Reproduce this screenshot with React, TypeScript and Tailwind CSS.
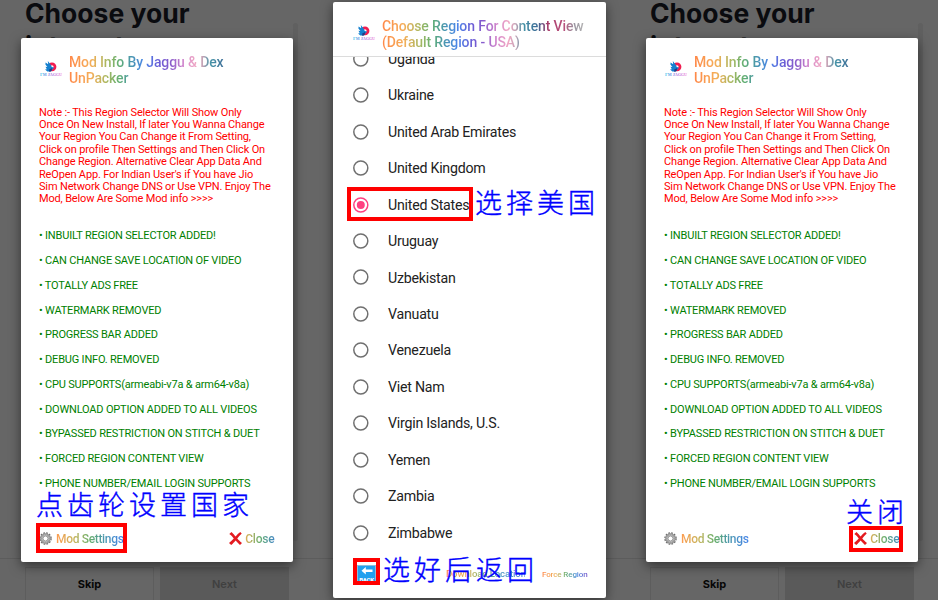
import React from "react";

const note = [
  "Note :- This Region Selector Will Show Only",
  "Once On New Install, If later You Wanna Change",
  "Your Region You Can Change it From Setting,",
  "Click on profile Then Settings and Then Click On",
  "Change Region. Alternative Clear App Data And",
  "ReOpen App. For Indian User's if You have Jio",
  "Sim Network Change DNS or Use VPN. Enjoy The",
  "Mod, Below Are Some Mod info >>>>",
];

const features = [
  "INBUILT REGION SELECTOR ADDED!",
  "CAN CHANGE SAVE LOCATION OF VIDEO",
  "TOTALLY ADS FREE",
  "WATERMARK REMOVED",
  "PROGRESS BAR ADDED",
  "DEBUG INFO. REMOVED",
  "CPU SUPPORTS(armeabi-v7a & arm64-v8a)",
  "DOWNLOAD OPTION ADDED TO ALL VIDEOS",
  "BYPASSED RESTRICTION ON STITCH & DUET",
  "FORCED REGION CONTENT VIEW",
  "PHONE NUMBER/EMAIL LOGIN SUPPORTS",
];

const countries = [
  "Uganda",
  "Ukraine",
  "United Arab Emirates",
  "United Kingdom",
  "United States",
  "Uruguay",
  "Uzbekistan",
  "Vanuatu",
  "Venezuela",
  "Viet Nam",
  "Virgin Islands, U.S.",
  "Yemen",
  "Zambia",
  "Zimbabwe",
];

const rainbow =
  "bg-clip-text text-transparent bg-[linear-gradient(90deg,#ff8748_0px,#f5ae58_22px,#a8b860_38px,#62af72_50px,#4b98ae_62px,#4a86e8_75px,#6a5cd6_90px,#8a5ccb_102px,#d487cc_115px,#f0a8c4_127px,#c0a2b4_134px,#4795a8_141px,#3c6a96_156px,#a83c6a_166px,#b8507c_182px,#9a95a0_192px,#b4b4b4_202px)]";

function Logo() {
  return (
    <svg width="22" height="18" viewBox="0 0 22 18" className="shrink-0">
      <defs>
        <linearGradient id="logoText" x1="0" x2="1" y1="0" y2="0">
          <stop offset="0" stopColor="#35c4ea" />
          <stop offset="0.5" stopColor="#9a6bdf" />
          <stop offset="1" stopColor="#ee7fd8" />
        </linearGradient>
      </defs>
      <circle cx="12" cy="5.8" r="3" fill="none" stroke="#f01d50" strokeWidth="2.800" />
      <path d="M5.600 1.400 8.200 3.200 7.800 0l2.800 3.400 1.200 2.600 2.200.4-1.800 2.400-1.600 1.600-3.200.2-2.400-2.200 1.800-.2L5.500 5.800l2 .2L5.400 3.600z" fill="#1480cf" />
      <path d="m9.200 8.400 3-1.400-.6 3-2.200 1z" fill="#263b83" />
      <text x="0" y="14.800" fontSize="5" textLength="22" lengthAdjust="spacingAndGlyphs" fill="url(#logoText)" fontFamily="Liberation Serif, serif" fontWeight="bold">I'M JAGGU</text>
    </svg>
  );
}

function Gear() {
  return (
    <svg width="13" height="13" viewBox="0 0 26 26" className="shrink-0">
      <circle cx="13" cy="13" r="11.200" fill="none" stroke="#6c6c6c" strokeWidth="2.600" strokeDasharray="3.500 2.360" />
      <circle cx="13" cy="13" r="8.400" fill="none" stroke="#858585" strokeWidth="4" />
      <circle cx="13" cy="13" r="8.300" fill="none" stroke="#bcbcbc" strokeWidth="1.300" />
      <circle cx="13" cy="13" r="5.200" fill="#fff" stroke="#6a6a6a" strokeWidth="1.600" />
    </svg>
  );
}

function Cross() {
  return (
    <svg width="13" height="13" viewBox="0 0 26 26" className="shrink-0">
      <path d="M5 0C8.500 3.500 10.700 6 13.200 9 16 5.600 19 2.600 22.500 0L25.500 3C22 6 19 9.500 16.500 13c3 3.500 5.800 6 9.500 9l-4 4c-3.200-3-6-6-8.800-9.200C10.300 20 8 23 4.400 26L0 22c3.600-3 6.800-6 9.500-9.200C7 9.500 4.400 6.500.6 4z" fill="#e31b20" />
    </svg>
  );
}

function Radio({ checked }: { checked: boolean }) {
  return (
    <svg width="16" height="16" viewBox="0 0 16 16" className="shrink-0">
      <circle cx="7.800" cy="8" r="7" fill="none" stroke={checked ? "#ff4081" : "#707070"} strokeWidth="1.500" />
      {checked && <circle cx="7.800" cy="8" r="4" fill="#ff4081" />}
    </svg>
  );
}

function Backdrop() {
  return (
    <div className="absolute inset-0 flex flex-col">
      <div className="flex h-[558px] shrink-0 justify-between overflow-hidden">
        <h1 className="-mt-[3px] whitespace-nowrap pl-[25px] font-['Inter'] text-[26.500px] font-bold leading-[33px] text-[#0a0b0f]">
          Choose your
          <br />
          interests
        </h1>
        <div className="mr-[15px] mt-[23px] h-[518px] w-[5px] rounded-full bg-[#606060]" />
      </div>
      <div className="flex flex-1 gap-[6px] border-t border-[#5c5c5c] pl-[25px] pt-[8px] font-['Inter'] text-[11px] font-bold">
        <div className="h-10 w-[129px] border border-[#5d5d5d] pt-[8px] text-center leading-[16px] text-[#060606]">Skip</div>
        <div className="h-10 w-[129px] bg-[#5a5a5a] pt-[9px] text-center font-semibold leading-[16px] text-[#404040]">Next</div>
      </div>
    </div>
  );
}

function InfoPhone() {
  return (
    <section className="relative h-[600px] w-[313px] shrink-0 overflow-hidden bg-[#666666]">
      <Backdrop />
      <div className="absolute left-[20.500px] top-[37.500px] h-[524px] w-[272.500px] rounded-[2px] bg-white px-[18.500px] pt-[16px] shadow-[0_4px_12px_rgba(0,0,0,0.5)]">
        <header className="flex h-[32px] items-start pl-[1px]">
          <div className="pt-[7px]"><Logo /></div>
          <h2 className={`ml-[7px] w-[203px] whitespace-nowrap text-[14px] font-medium leading-[16px] tracking-[-0.130px] ${rainbow}`}>
            Mod Info By Jaggu &amp; Dex
            <br />
            UnPacker
          </h2>
        </header>
        <p className="mt-[21px] whitespace-nowrap text-[11px] leading-[12.400px] tracking-[-0.160px] text-[#ff0000]">
          {note.map((line) => (
            <span key={line} className="block">{line}</span>
          ))}
        </p>
        <ul className="mt-[18.500px] whitespace-nowrap text-[11px] tracking-[-0.190px] text-[#008000]">
          {features.map((item) => (
            <li key={item} className="h-[24.750px] leading-[24.750px]">• {item}</li>
          ))}
        </ul>
        <footer className="mt-[29px] flex h-[26px] items-center justify-between text-[12px] font-medium">
          <div className="flex items-center gap-[4px]">
            <Gear />
            <span className="whitespace-nowrap bg-clip-text tracking-[-0.330px] text-transparent bg-[linear-gradient(90deg,#ff9c50_0px,#c7b45b_18px,#67ae6c_34px,#4b98ae_48px,#4685e8_67px)]">Mod Settings</span>
          </div>
          <div className="flex items-center gap-[3px]">
            <Cross />
            <span className="bg-clip-text tracking-[-0.200px] text-transparent bg-[linear-gradient(90deg,#e0ae55,#68af70_50%,#4387c8)]">Close</span>
          </div>
        </footer>
      </div>
    </section>
  );
}

function RegionPhone() {
  return (
    <section className="relative h-[600px] w-[312px] shrink-0 overflow-hidden bg-[#666666]">
      <div className="absolute inset-x-0 top-[558px] border-t border-[#5c5c5c]" />
      <div className="absolute left-[20px] top-[1.500px] flex h-[596px] w-[272.500px] flex-col rounded-[2px] bg-white shadow-[0_3px_12px_rgba(0,0,0,0.5)]">
        <header className="flex h-[55px] shrink-0 items-start border-b border-[#dcdcdc] pl-[20px] pt-[16px]">
          <div className="pt-[7px]"><Logo /></div>
          <h2 className={`ml-[7px] w-[203px] whitespace-nowrap text-[14px] font-medium leading-[16px] tracking-[-0.130px] ${rainbow}`}>
            Choose Region For Content View
            <br />
            (Default Region - USA)
          </h2>
        </header>
        <ul className="h-[496px] overflow-hidden text-[14.200px] tracking-[-0.240px] text-[#222222]">
          {countries.map((name, i) => (
            <li key={name} className={`flex h-[36.460px] items-center pl-[19.500px] ${i === 0 ? "-mt-[16px]" : ""}`}>
              <Radio checked={name === "United States"} />
              <span className="ml-[19.500px] whitespace-nowrap pt-[1.500px]">{name}</span>
            </li>
          ))}
        </ul>
        <footer className="flex h-[44px] items-center pl-[24px] text-[8px] font-medium">
          <span className="flex h-[19px] w-[19px] shrink-0 flex-col items-center justify-between border border-[#8bbcdc] bg-[#22a0ee]">
            <svg width="12" height="10" viewBox="0 0 12 10" className="shrink-0"><path d="M4.800 1v2.500h6.700v2.600H4.800v2.500L.5 4.800z" fill="white" /></svg>
            <span className="h-[7px] text-[6px] font-bold leading-[7px] tracking-[-0.300px] text-white">BACK</span>
          </span>
          <span className="ml-[70px] w-[79px] whitespace-nowrap bg-clip-text text-[9.600px] tracking-[-0.140px] text-transparent bg-[linear-gradient(90deg,#ff8748,#eab35a_25%,#70b070_48%,#4593bc_68%,#4a86e8)]">Download Location</span>
          <span className="ml-[17px] whitespace-nowrap bg-clip-text tracking-[-0.120px] text-transparent bg-[linear-gradient(90deg,#ff8748,#efaf55_30%,#68af70_52%,#4389dc_75%,#7b56cc)]">Force Region</span>
        </footer>
      </div>
    </section>
  );
}

function Note({ className, children }: { className: string; children: React.ReactNode }) {
  return (
    <span className={`absolute whitespace-nowrap font-['Noto_Sans_CJK_SC',sans-serif] text-[27px] font-light leading-[32px] tracking-[4px] text-[#0000ff] [-webkit-text-stroke:0.4px_#0000ff] ${className}`}>
      {children}
    </span>
  );
}

export default function App() {
  return (
    <main className="relative flex h-[600px] w-[939px] overflow-hidden bg-white font-['Roboto',sans-serif]">
      <InfoPhone />
      <RegionPhone />
      <InfoPhone />
      <div className="absolute left-[36px] top-[523px] h-[30px] w-[91px] border-4 border-[#ff0000]" />
      <div className="absolute left-[347px] top-[187px] h-[34px] w-[126px] border-4 border-[#ff0000]" />
      <div className="absolute left-[353px] top-[558px] h-[27px] w-[27px] border-4 border-[#ff0000]" />
      <div className="absolute left-[849px] top-[526px] h-[26px] w-[54px] border-4 border-[#ff0000]" />
      <Note className="left-[36px] top-[488px]">点齿轮设置国家</Note>
      <Note className="left-[475px] top-[186px]">选择美国</Note>
      <Note className="left-[383px] top-[553px]">选好后返回</Note>
      <Note className="left-[846px] top-[495px]">关闭</Note>
    </main>
  );
}
